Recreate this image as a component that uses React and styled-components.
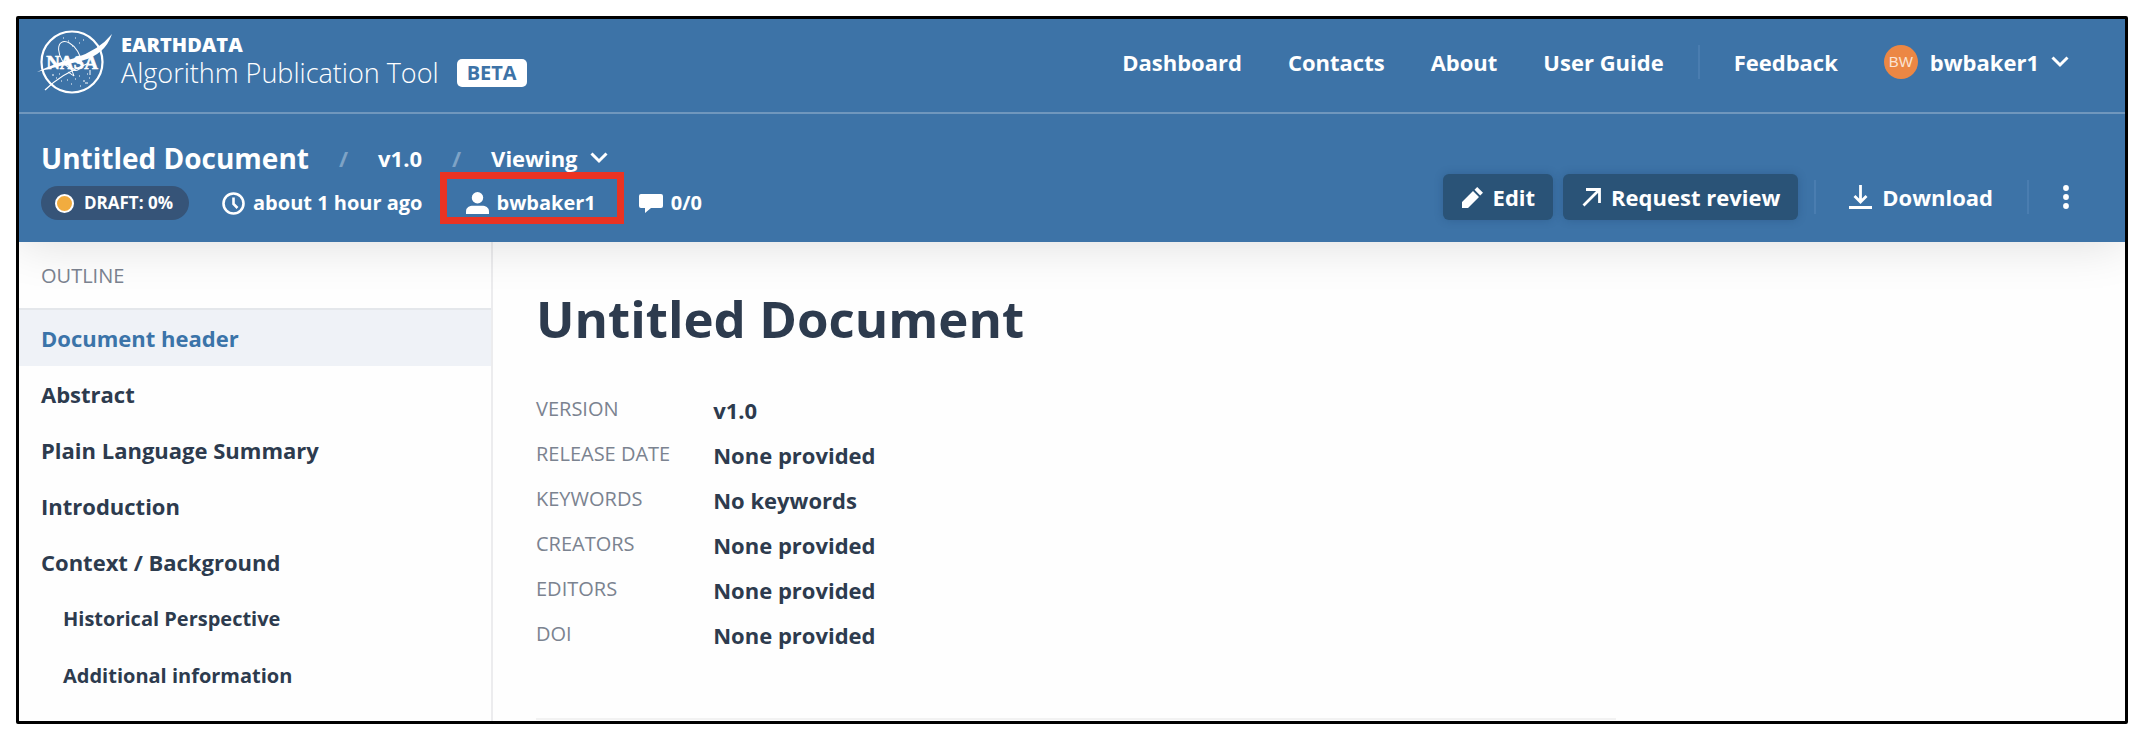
import React from 'react';
import styled, { createGlobalStyle, css } from 'styled-components';

const GlobalStyle = createGlobalStyle`
  *, *::before, *::after { box-sizing: border-box; }
  body {
    margin: 0;
    background: #fff;
    color: #2d3b4e;
    font-family: "Open Sans", "Noto Sans", sans-serif;
    font-size: 22px;
    line-height: 32px;
    font-weight: 700;
  }
  a { color: inherit; text-decoration: none; }
  button { font: inherit; color: inherit; background: none; border: 0; padding: 0; cursor: pointer; }
  h1, h2, p, ul, ol, dl, dd { margin: 0; padding: 0; }
  ul, ol { list-style: none; }
  svg { display: block; flex: none; }
`;

const Frame = styled.div`
  display: flex;
  flex-direction: column;
  min-height: calc(100vh - 38px);
  margin: 16px 18px 22px 16px;
  border: 3px solid #000;
  border-radius: 2px;
  background: #fefefe;
`;

const Header = styled.header`
  position: relative;
  background: #3d73a7;
  color: #fff;
  box-shadow: 0 0 48px rgba(0, 0, 0, 0.14);
  clip-path: inset(0 0 -64px 0);
`;

const Masthead = styled.div`
  display: flex;
  align-items: flex-start;
  justify-content: space-between;
  height: 95px;
  padding: 10px 56px 0 18px;
  border-bottom: 2px solid #7097bd;
`;

const Brand = styled.a`
  display: flex;
  align-items: flex-start;
`;

const BrandText = styled.span`
  display: flex;
  flex-direction: column;
  padding: 2px 0 0 8px;
`;

const Agency = styled.span`
  font-size: 20px;
  line-height: 28px;
  font-weight: 800;
`;

const Product = styled.span`
  font-size: 27px;
  line-height: 28px;
  font-weight: 300;
`;

const Beta = styled.span`
  margin: 30px 0 0 18px;
  padding: 0 10px;
  border-radius: 5px;
  background: #fff;
  color: #3d73a7;
  font-size: 20px;
  line-height: 28px;
`;

const Nav = styled.nav`
  display: flex;
  align-items: center;
  gap: 34px;
  padding-top: 16px;
  line-height: 34px;
`;

const NavGroup = styled.div`
  display: flex;
  align-items: center;
  gap: 46px;
`;

const Divider = styled.span`
  width: 2px;
  height: 34px;
  background: #4a7db0;
`;

const UserMenu = styled.button`
  display: flex;
  align-items: center;
  gap: 12px;
`;

const Avatar = styled.span`
  width: 34px;
  height: 34px;
  border-radius: 50%;
  background: #ec8744;
  color: #fbe3d2;
  font-family: "Liberation Sans", sans-serif;
  font-size: 15px;
  line-height: 34px;
  font-weight: 400;
  text-align: center;
`;

const DocBar = styled.div`
  display: flex;
  align-items: flex-end;
  justify-content: space-between;
  height: 128px;
  padding: 0 47px 22px 22px;
`;

const DocInfo = styled.div`
  display: flex;
  flex-direction: column;
  gap: 8px;
`;

const Crumbs = styled.ol`
  display: flex;
  align-items: center;
  line-height: 40px;
`;

const Crumb = styled.li`
  display: flex;

  &:not(:first-child)::before {
    content: "/";
    margin: 0 30px;
    color: #7ea3c6;
  }
`;

const DocTitle = styled.a`
  font-size: 28px;
`;

const ModeButton = styled.button`
  display: flex;
  align-items: center;
  gap: 12px;
`;

const StatusRow = styled.div`
  display: flex;
  align-items: center;
  gap: 33px;
  font-size: 20px;
  line-height: 34px;
`;

const Meta = styled.ul`
  display: flex;
  align-items: center;
  gap: 43px;
`;

const MetaItem = styled.li`
  position: relative;
  display: flex;
  align-items: center;
  gap: 8px;
`;

const Callout = styled.span`
  position: absolute;
  inset: -14px -28px -4px -26px;
  border: 7px solid #ea3323;
  pointer-events: none;
`;

const Status = styled.span`
  display: flex;
  align-items: center;
  gap: 10px;
  padding: 0 16px 0 14px;
  border-radius: 17px;
  background: #365478;
  font-size: 17px;
`;

const StatusDot = styled.span`
  width: 19px;
  height: 19px;
  border: 2px solid #fff;
  border-radius: 50%;
  background: #f1ac3f;
`;

const Actions = styled.div`
  display: flex;
  align-items: center;
`;

const Action = styled.button`
  display: flex;
  align-items: center;
  gap: 10px;
  height: 46px;
  ${(p) =>
    p.$filled &&
    css`
      margin-right: ${p.$last ? 16 : 10}px;
      padding: 0 18px 0 19px;
      border-radius: 6px;
      background: #2a5377;
      box-shadow: 0 0 8px rgba(20, 50, 90, 0.25);
    `}
  ${(p) =>
    !p.$filled &&
    css`
      padding: 0 34px 0 33px;
    `}
`;

const MoreButton = styled.button`
  display: flex;
  align-items: center;
  justify-content: center;
  width: 24px;
  height: 46px;
  margin-left: 25px;
`;

const Body = styled.div`
  display: flex;
  flex: 1;
`;

const Sidebar = styled.aside`
  flex: none;
  width: 474px;
  border-right: 2px solid #ececee;
`;

const OutlineTitle = styled.h2`
  height: 68px;
  padding: 18px 22px 0;
  border-bottom: 2px solid #e4e7eb;
  color: #7b8390;
  font-size: 20px;
  line-height: 32px;
  font-weight: 400;
`;

const OutlineLink = styled.a`
  display: block;
  padding: 0 22px;
  line-height: 56px;
  ${(p) =>
    p.$nested &&
    css`
      padding-left: 44px;
      font-size: 20px;
      line-height: 57px;
    `}
  ${(p) =>
    p.$active &&
    css`
      background: #eff2f7;
      color: #3b74a9;
    `}
`;

const Main = styled.main`
  display: flex;
  flex: 1;
  flex-direction: column;
  padding: 40px 44px 1px 43px;
`;

const Title = styled.h1`
  font-size: 51px;
  line-height: 72px;
`;

const Details = styled.dl`
  display: grid;
  grid-template-columns: max-content 1fr;
  grid-auto-rows: 45px;
  column-gap: 43px;
  flex: 1;
  max-width: 1080px;
  padding-top: 40px;
  border-bottom: 2px solid #f2f2f2;
`;

const Term = styled.dt`
  color: #7b8390;
  font-size: 20px;
  font-weight: 400;
  line-height: 30px;
`;

const Value = styled.dd`
  line-height: 32px;
`;

const Chevron = () => (
  <svg width="18" height="12" viewBox="0 0 18 12" fill="none" stroke="#fff" strokeWidth="3" aria-hidden="true">
    <path d="M1.5 1.5 9 9 16.5 1.5" />
  </svg>
);

const NasaLogo = () => (
  <svg width="76" height="68" viewBox="0 0 76 68" fill="none" stroke="#fff" aria-hidden="true">
    <circle cx="35" cy="33" r="30.5" strokeWidth="2.2" />
    <ellipse cx="33" cy="27" rx="9" ry="16" transform="rotate(-32 33 27)" strokeWidth="1" />
    <path d="M34 39 37 47 31 43" strokeWidth="1" />
    <path d="M0 43Q18 34 38 29Q62 21 75 5Q68 26 44 32Q22 37 0 43Z" fill="#fff" stroke="none" />
    <path d="M8 61Q24 45 52 34" strokeWidth="1.3" />
    <text x="35" y="40" textAnchor="middle" fill="#fff" stroke="#fff" strokeWidth="0.6" fontFamily="Liberation Serif, serif" fontWeight="700" fontSize="19">NASA</text>
    <path d="M26 9h1M31 12h1M38 9h1M42 14h1M46 11h1M35 17h1M15 46h2M19 49h1M24 52h1M30 51h1M34 55h1M42 47h1M46 52h2M50 45h1M52 49h1M43 57h1M22 45h1M38 50h1M53 41v5M48 54h3" strokeWidth="1" />
  </svg>
);

const ClockIcon = () => (
  <svg width="23" height="23" viewBox="0 0 23 23" fill="none" stroke="#fff" strokeWidth="2.6" aria-hidden="true">
    <circle cx="11.5" cy="11.5" r="10" />
    <path d="M11.5 5.5v6.500l4 4" />
  </svg>
);

const PersonIcon = () => (
  <svg width="23" height="22" viewBox="0 0 23 22" fill="#fff" aria-hidden="true">
    <circle cx="11.5" cy="5.7" r="5.7" />
    <path d="M0 22v-2.500C0 15.500 3.500 13.800 7 13.800h9c3.500 0 7 1.700 7 5.700V22Z" />
  </svg>
);

const CommentIcon = () => (
  <svg width="24" height="20" viewBox="0 0 24 20" fill="#fff" aria-hidden="true">
    <path d="M2 1h20a2 2 0 0 1 2 2v10a2 2 0 0 1-2 2H12l-6 5v-5H2a2 2 0 0 1-2-2V3a2 2 0 0 1 2-2Z" />
  </svg>
);

const PencilIcon = () => (
  <svg width="21" height="21" viewBox="0 0 21 21" fill="#fff" aria-hidden="true">
    <path d="M0 21v-6L11 4l6 6L6 21ZM12.500 2.800 15.200 0 21 5.800 18.200 8.500Z" />
  </svg>
);

const ArrowIcon = () => (
  <svg width="19" height="19" viewBox="0 0 19 19" fill="none" stroke="#fff" strokeWidth="2.8" aria-hidden="true">
    <path d="M4 1.500h13.500V15M17 2 1.500 17.500" />
  </svg>
);

const DownloadIcon = () => (
  <svg width="23" height="24" viewBox="0 0 23 24" fill="none" stroke="#fff" strokeWidth="2.8" aria-hidden="true">
    <path d="M11.500 0v16M5.500 11l6 6 6-6M0 22.500h23" />
  </svg>
);

const DotsIcon = () => (
  <svg width="6" height="24" viewBox="0 0 6 24" fill="#fff" aria-hidden="true">
    <circle cx="3" cy="3" r="2.900" />
    <circle cx="3" cy="12" r="2.900" />
    <circle cx="3" cy="21" r="2.900" />
  </svg>
);

const navLinks = ['Dashboard', 'Contacts', 'About', 'User Guide'];

const outline = [
  { label: 'Document header', active: true },
  { label: 'Abstract' },
  { label: 'Plain Language Summary' },
  { label: 'Introduction' },
  { label: 'Context / Background' },
  { label: 'Historical Perspective', nested: true },
  { label: 'Additional information', nested: true },
];

const details = [
  ['VERSION', 'v1.0'],
  ['RELEASE DATE', 'None provided'],
  ['KEYWORDS', 'No keywords'],
  ['CREATORS', 'None provided'],
  ['EDITORS', 'None provided'],
  ['DOI', 'None provided'],
];

export default function App() {
  return (
    <>
      <GlobalStyle />
      <Frame>
        <Header>
          <Masthead>
            <Brand href="#home">
              <NasaLogo />
              <BrandText>
                <Agency>EARTHDATA</Agency>
                <Product>Algorithm Publication Tool</Product>
              </BrandText>
              <Beta>BETA</Beta>
            </Brand>
            <Nav aria-label="Main">
              <NavGroup>
                {navLinks.map((label) => (
                  <a key={label} href="#nav">{label}</a>
                ))}
              </NavGroup>
              <Divider />
              <NavGroup>
                <a href="#feedback">Feedback</a>
                <UserMenu type="button">
                  <Avatar>BW</Avatar>
                  bwbaker1
                  <Chevron />
                </UserMenu>
              </NavGroup>
            </Nav>
          </Masthead>
          <DocBar>
            <DocInfo>
              <Crumbs>
                <Crumb><DocTitle href="#document">Untitled Document</DocTitle></Crumb>
                <Crumb><a href="#version">v1.0</a></Crumb>
                <Crumb>
                  <ModeButton type="button">Viewing <Chevron /></ModeButton>
                </Crumb>
              </Crumbs>
              <StatusRow>
                <Status><StatusDot />DRAFT: 0%</Status>
                <Meta>
                  <MetaItem><ClockIcon />about 1 hour ago</MetaItem>
                  <MetaItem><PersonIcon />bwbaker1<Callout /></MetaItem>
                  <MetaItem><CommentIcon />0/0</MetaItem>
                </Meta>
              </StatusRow>
            </DocInfo>
            <Actions>
              <Action type="button" $filled><PencilIcon />Edit</Action>
              <Action type="button" $filled $last><ArrowIcon />Request review</Action>
              <Divider />
              <Action type="button"><DownloadIcon />Download</Action>
              <Divider />
              <MoreButton type="button" aria-label="More actions"><DotsIcon /></MoreButton>
            </Actions>
          </DocBar>
        </Header>
        <Body>
          <Sidebar>
            <OutlineTitle>OUTLINE</OutlineTitle>
            <ul>
              {outline.map((item) => (
                <li key={item.label}>
                  <OutlineLink href="#section" $active={item.active} $nested={item.nested}>
                    {item.label}
                  </OutlineLink>
                </li>
              ))}
            </ul>
          </Sidebar>
          <Main>
            <Title>Untitled Document</Title>
            <Details>
              {details.map(([term, value]) => (
                <React.Fragment key={term}>
                  <Term>{term}</Term>
                  <Value>{value}</Value>
                </React.Fragment>
              ))}
            </Details>
          </Main>
        </Body>
      </Frame>
    </>
  );
}
